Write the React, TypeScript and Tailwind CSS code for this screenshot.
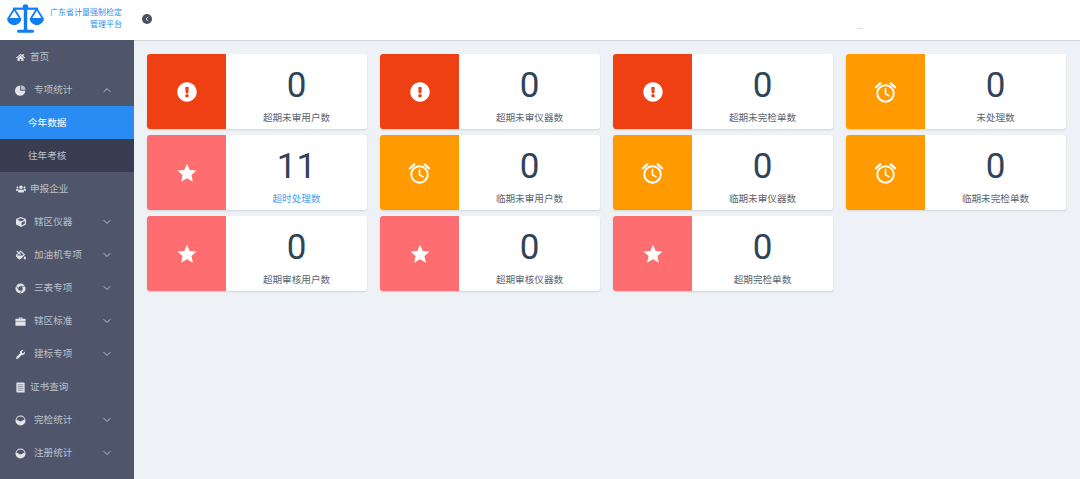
import { ChevronDown, ChevronLeft, ChevronUp } from 'lucide-react'
import type { ReactNode } from 'react'
import { FaCube, FaExclamationCircle, FaFillDrip, FaHome, FaUsers, FaWrench } from 'react-icons/fa'

const FONT = 'font-["Liberation_Sans","Noto_Sans_CJK_SC",sans-serif]'

type Kind = 'alert' | 'clock' | 'star'

interface CardData {
  kind: Kind
  value: string
  label: string
  link?: boolean
}

const CARDS: CardData[] = [
  { kind: 'alert', value: '0', label: '超期未审用户数' },
  { kind: 'alert', value: '0', label: '超期未审仪器数' },
  { kind: 'alert', value: '0', label: '超期未完检单数' },
  { kind: 'clock', value: '0', label: '未处理数' },
  { kind: 'star', value: '11', label: '超时处理数', link: true },
  { kind: 'clock', value: '0', label: '临期未审用户数' },
  { kind: 'clock', value: '0', label: '临期未审仪器数' },
  { kind: 'clock', value: '0', label: '临期未完检单数' },
  { kind: 'star', value: '0', label: '超期审核用户数' },
  { kind: 'star', value: '0', label: '超期审核仪器数' },
  { kind: 'star', value: '0', label: '超期完检单数' },
]

function ScaleLogo() {
  return (
    <svg viewBox="0 0 37 29" className="h-[29px] w-[37px]" fill="#0f7ef5">
      <rect x="16.8" y="1" width="3.4" height="25" />
      <rect x="10" y="25.8" width="17" height="3" rx="1.5" />
      <rect x="6" y="3.6" width="25" height="2.2" />
      <circle cx="18.5" cy="3" r="2.8" />
      <path d="M0 14 a7.2 7.2 0 0 0 14.4 0 Z" />
      <path d="M22.6 14 a7.2 7.2 0 0 0 14.4 0 Z" />
      <path d="M7.2 5 L1.6 14 M7.2 5 L12.8 14 M29.8 5 L24.2 14 M29.8 5 L35.4 14" stroke="#0f7ef5" strokeWidth="1.8" fill="none" />
    </svg>
  )
}

function PieIcon() {
  return (
    <svg viewBox="0 0 12 12" className="h-[11px] w-[11px]" fill="currentColor">
      <path d="M5.6 0.6 V6.2 H11.2 A5.6 5.6 0 1 1 5.6 0.6 Z" />
      <path d="M6.6 0.4 A5.2 5.2 0 0 1 11.4 5.2 H6.6 Z" opacity="0.75" />
    </svg>
  )
}

function HalfIcon() {
  return (
    <svg viewBox="0 0 12 12" className="h-[11px] w-[11px]" fill="currentColor">
      <path d="M6 0.5 A5.5 5.5 0 1 1 6 11.5 A5.5 5.5 0 1 1 6 0.5 Z M6 1.6 A4.4 4.4 0 0 0 1.6 5.6 C3.5 4.6 4.5 6.8 6 6.8 C7.5 6.8 8.5 4.6 10.4 5.6 A4.4 4.4 0 0 0 6 1.6 Z" fillRule="evenodd" />
    </svg>
  )
}

function DialIcon() {
  return (
    <svg viewBox="0 0 12 12" className="h-[11px] w-[11px]" fill="currentColor">
      <path d="M6 0.5 A5.5 5.5 0 1 1 6 11.5 A5.5 5.5 0 1 1 6 0.5 Z M6 3.6 A2.4 2.4 0 1 0 6 8.4 A2.4 2.4 0 1 0 6 3.6 Z" fillRule="evenodd" />
      <path d="M6 3.6 H11 M3.9 7.2 L1.6 3.2 M8 7.3 L5.4 11.4" stroke="#4f566b" strokeWidth="0.7" />
    </svg>
  )
}

function CaseIcon() {
  return (
    <svg viewBox="0 0 12 12" className="h-[11px] w-[11px]" fill="currentColor">
      <path d="M4 1.5 H8 V3 H11.5 V10.5 H0.5 V3 H4 Z M5 2.4 V3 H7 V2.4 Z" fillRule="evenodd" />
      <rect x="0.5" y="5.4" width="11" height="0.5" fill="#4f566b" />
    </svg>
  )
}

function DocIcon() {
  return (
    <svg viewBox="0 0 12 12" className="h-[11px] w-[11px]" fill="currentColor">
      <rect x="1.5" y="0.5" width="9" height="11" rx="1" />
      <path d="M3 3 H9 M3 5 H9 M3 7 H9 M3 9 H9" stroke="#4f566b" strokeWidth="0.6" />
    </svg>
  )
}

function ClockIcon() {
  return (
    <svg viewBox="0 0 24 24" className="h-[23px] w-[23px]" fill="none" stroke="white">
      <circle cx="12" cy="13" r="8.6" strokeWidth="2.1" />
      <path d="M12 8 V13.4 L15.6 15.4" strokeWidth="1.7" strokeLinecap="round" />
      <path d="M2 6.6 L6.6 2.6 M22 6.6 L17.4 2.6" strokeWidth="2.4" strokeLinecap="round" />
    </svg>
  )
}

function StarIcon() {
  return (
    <svg viewBox="0 0 20 20" className="h-[20px] w-[20px]" fill="white">
      <polygon points="10,0.8 12.7,7 19.5,7.6 14.4,12.1 15.9,18.8 10,15.3 4.1,18.8 5.6,12.1 0.5,7.6 7.3,7" />
    </svg>
  )
}

function NavItem({
  icon,
  label,
  arrow,
  wide,
}: {
  icon: ReactNode
  label: string
  arrow?: 'up' | 'down'
  wide?: boolean
}) {
  return (
    <div className="flex h-[33px] items-center pt-[1px] text-[9.6px] text-[#bcc0ca]">
      <span className="ml-[15px] flex w-[11px] justify-center text-[#e2e4e8]">{icon}</span>
      <span className={wide ? 'ml-[8px]' : 'ml-[4px]'}>{label}</span>
      {arrow === 'up' && <ChevronUp className="absolute left-[101px] h-[12px] w-[12px]" strokeWidth={2} />}
      {arrow === 'down' && <ChevronDown className="absolute left-[101px] h-[12px] w-[12px]" strokeWidth={2} />}
    </div>
  )
}

function StatCard({ card }: { card: CardData }) {
  const box =
    card.kind === 'alert' ? 'bg-[#ef4014]' : card.kind === 'clock' ? 'bg-[#ff9b00]' : 'bg-[#fe6d6f]'
  return (
    <div className="flex h-[75px] w-[220px] overflow-hidden rounded-[3px] bg-white shadow-[0_1px_2px_rgba(0,0,0,0.12)]">
      <div className={`flex w-[79px] shrink-0 items-center justify-center pt-[1px] ${box}`}>
        {card.kind === 'alert' && <FaExclamationCircle className="h-[20px] w-[20px] text-white" />}
        {card.kind === 'clock' && <ClockIcon />}
        {card.kind === 'star' && <StarIcon />}
      </div>
      <div className="flex flex-1 flex-col items-center">
        <div className='mt-[12px] font-["Roboto",sans-serif] text-[35px] leading-[40px] text-[#2f4359]'>{card.value}</div>
        <div className={`mt-[5px] text-[9.6px] leading-[14px] ${card.link ? 'text-[#4e9df2]' : 'text-[#5b6470]'}`}>
          {card.label}
        </div>
      </div>
    </div>
  )
}

export default function App() {
  return (
    <div className={`${FONT} flex h-[479px] w-[1080px] flex-col overflow-hidden bg-[#eef1f5]`}>
      <header className="relative flex h-[40px] shrink-0 items-center bg-white shadow-[0_1px_1px_rgba(0,0,0,0.1)]">
        <div className="ml-[7px] mt-[-3px]">
          <ScaleLogo />
        </div>
        <div className="ml-[5px] mt-[-3px] w-[73px] text-right text-[8px] leading-[12px] text-[#2f8df0]">
          广东省计量强制检定
          <br />
          管理平台
        </div>
        <div className="ml-[20px] mt-[-2px] flex h-[10px] w-[10px] items-center justify-center rounded-full bg-[#4a5060]">
          <ChevronLeft className="h-[8px] w-[8px] text-[#d5d8de]" strokeWidth={3} />
        </div>
        <div className="absolute left-[857px] top-[28px] h-px w-[6px] bg-[#d8dade]" />
      </header>
      <div className="flex flex-1">
        <aside className="relative w-[134px] shrink-0 bg-[#4f566b]">
          <NavItem icon={<FaHome size={9} />} label="首页" />
          <NavItem icon={<PieIcon />} label="专项统计" arrow="up" wide />
          <div className="flex h-[33px] items-center bg-[#2a8cf2] pl-[28px] pt-[1px] text-[9.6px] text-white">今年数据</div>
          <div className="flex h-[33px] items-center bg-[#383e50] pl-[28px] pt-[1px] text-[9.6px] text-[#bcc0ca]">往年考核</div>
          <NavItem icon={<FaUsers size={10} />} label="申报企业" />
          <NavItem icon={<FaCube size={10} />} label="辖区仪器" arrow="down" wide />
          <NavItem icon={<FaFillDrip size={10} />} label="加油机专项" arrow="down" wide />
          <NavItem icon={<DialIcon />} label="三表专项" arrow="down" wide />
          <NavItem icon={<CaseIcon />} label="辖区标准" arrow="down" wide />
          <NavItem icon={<FaWrench size={9} />} label="建标专项" arrow="down" wide />
          <NavItem icon={<DocIcon />} label="证书查询" />
          <NavItem icon={<HalfIcon />} label="完检统计" arrow="down" wide />
          <NavItem icon={<HalfIcon />} label="注册统计" arrow="down" wide />
        </aside>
        <main className="flex-1 pl-[13px] pt-[14px]">
          <div className="grid grid-cols-[repeat(4,220px)] gap-x-[13px] gap-y-[6px]">
            {CARDS.map((card) => (
              <StatCard key={card.label} card={card} />
            ))}
          </div>
        </main>
      </div>
    </div>
  )
}
